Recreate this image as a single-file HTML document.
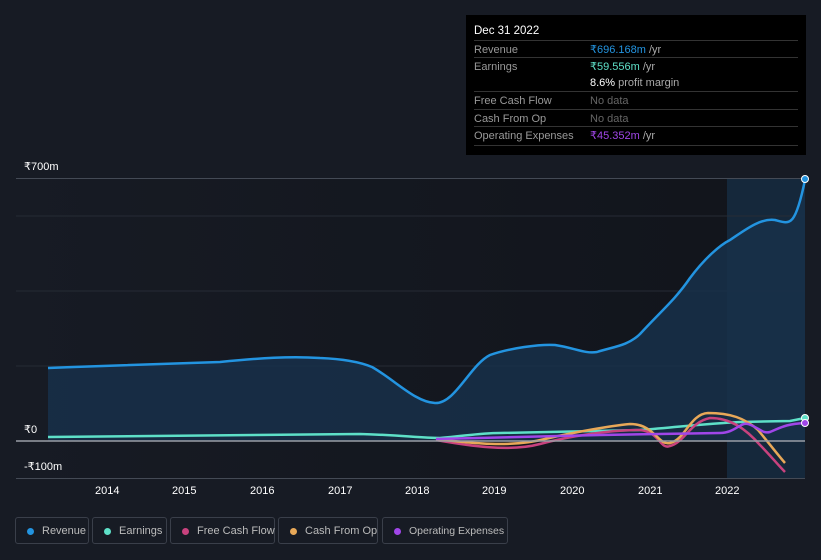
<!DOCTYPE html><html><head><style>
body{margin:0;width:821px;height:560px;background:#171b24;font-family:"Liberation Sans",sans-serif;overflow:hidden;position:relative}
.tip{position:absolute;left:466px;top:15px;width:340px;height:140px;background:#000;color:#fff;font-size:11px}
.tip .h{position:absolute;left:8px;top:10px;font-size:11.5px}
.row{position:absolute;left:8px;width:324px;border-top:1px solid #333;height:17px;line-height:18px;color:#999}
.row span{position:absolute;left:116px}
.leg{position:absolute;top:517px;height:27px;border:1px solid #3a3f4a;border-radius:3px;color:#bbb;font-size:11px;line-height:26px;box-sizing:border-box;white-space:nowrap}
.leg i{position:absolute;left:11px;top:10px;width:7px;height:7px;border-radius:50%}
.leg b{font-weight:normal;position:absolute;left:26px}
.ax{position:absolute;color:#fff;font-size:11px}
</style></head><body>
<svg width="821" height="560" style="position:absolute;left:0;top:0">
<defs><linearGradient id="g" x1="0" x2="1"><stop offset="0" stop-color="#171b24"/><stop offset="1" stop-color="#11141b"/></linearGradient></defs>
<rect x="16" y="178" width="789" height="300" fill="url(#g)"/>
<rect x="727" y="178" width="78" height="300" fill="#15283b"/>
<g stroke="#262b35" stroke-width="1"><line x1="16" y1="216" x2="805" y2="216"/><line x1="16" y1="291" x2="805" y2="291"/><line x1="16" y1="366" x2="805" y2="366"/></g>
<line x1="16" y1="178.5" x2="805" y2="178.5" stroke="#444a55"/>
<line x1="16" y1="478.5" x2="805" y2="478.5" stroke="#444a55"/>
<path d="M48,368 C120,365 200,363 220,362 C260,358 290,356 320,358 C345,359 360,362 372,367 C395,380 415,402 435,403 C455,404 470,365 490,355 C510,348 540,344 555,345 C575,348 585,354 597,352 C612,347 628,346 640,334 C660,312 675,300 690,278 C705,258 720,245 730,240 C745,230 760,218 775,220 C790,224 795,228 805,180 L805,441 L48,441Z" fill="#17304a" opacity="0.85"/>
<path d="M48,368 C120,365 200,363 220,362 C260,358 290,356 320,358 C345,359 360,362 372,367 C395,380 415,402 435,403 C455,404 470,365 490,355 C510,348 540,344 555,345 C575,348 585,354 597,352 C612,347 628,346 640,334 C660,312 675,300 690,278 C705,258 720,245 730,240 C745,230 760,218 775,220 C790,224 795,228 805,180" fill="none" stroke="#2394e0" stroke-width="2.5"/>
<path d="M48,437 L360,434 C400,435 420,438 440,438 C465,436 480,433 500,433 L640,430 C680,427 700,424 740,422 L790,421 L805,418" fill="none" stroke="#5ee0c8" stroke-width="2.5"/>
<path d="M436,440 C470,446 510,452 540,444 C570,436 610,430 640,430 C660,432 660,450 670,446 C685,442 690,422 710,418 C730,418 745,428 760,445 C770,455 778,465 785,472" fill="none" stroke="#c8427e" stroke-width="2.5"/>
<path d="M436,439 C470,443 510,448 545,439 C575,432 610,426 630,424 C655,424 658,446 670,443 C685,440 690,414 708,413 C730,413 745,418 758,430 C768,442 778,455 785,463" fill="none" stroke="#e8a858" stroke-width="2.5"/>
<path d="M436,439 L600,435 L720,433 C735,433 740,422 748,424 C760,428 762,434 770,432 C780,428 785,424 805,423" fill="none" stroke="#a046e8" stroke-width="2.5"/>
<line x1="16" y1="441" x2="805" y2="441" stroke="#9a9ea6" stroke-width="1.5"/>
<circle cx="805" cy="179" r="3.5" fill="#2394e0" stroke="#fff"/>
<circle cx="805" cy="418" r="3.5" fill="#5ee0c8" stroke="#fff"/>
<circle cx="805" cy="423" r="3.5" fill="#a046e8" stroke="#fff"/>
</svg>
<div class="ax" style="left:24px;top:160px">₹700m</div>
<div class="ax" style="left:24px;top:423px">₹0</div>
<div class="ax" style="left:24px;top:460px">-₹100m</div>
<div class="ax" style="left:95px;top:485px">2014</div>
<div class="ax" style="left:172px;top:485px">2015</div>
<div class="ax" style="left:250px;top:485px">2016</div>
<div class="ax" style="left:328px;top:485px">2017</div>
<div class="ax" style="left:405px;top:485px">2018</div>
<div class="ax" style="left:482px;top:485px">2019</div>
<div class="ax" style="left:560px;top:485px">2020</div>
<div class="ax" style="left:638px;top:485px">2021</div>
<div class="ax" style="left:715px;top:485px">2022</div>
<div class="tip"><div class="h">Dec 31 2022</div>
<div class="row" style="top:25px">Revenue<span style="color:#2394e0">₹696.168m <span style="position:static;color:#aaa">/yr</span></span></div>
<div class="row" style="top:42px">Earnings<span style="color:#5ee0c8">₹59.556m <span style="position:static;color:#aaa">/yr</span></span></div>
<div class="row" style="top:59px;border:none"><span style="color:#fff">8.6% <span style="position:static;color:#aaa">profit margin</span></span></div>
<div class="row" style="top:76px">Free Cash Flow<span style="color:#666">No data</span></div>
<div class="row" style="top:94px">Cash From Op<span style="color:#666">No data</span></div>
<div class="row" style="top:111px">Operating Expenses<span style="color:#a046e8">₹45.352m <span style="position:static;color:#aaa">/yr</span></span></div>
<div class="row" style="top:130px;height:0"></div>
</div>
<div class="leg" style="left:15px;width:74px"><i style="background:#2394e0"></i><b>Revenue</b></div>
<div class="leg" style="left:92px;width:75px"><i style="background:#5ee0c8"></i><b>Earnings</b></div>
<div class="leg" style="left:170px;width:105px"><i style="background:#c8427e"></i><b>Free Cash Flow</b></div>
<div class="leg" style="left:278px;width:100px"><i style="background:#e8a858"></i><b>Cash From Op</b></div>
<div class="leg" style="left:382px;width:126px"><i style="background:#a046e8"></i><b style="font-size:10.5px">Operating Expenses</b></div>
</body></html>
